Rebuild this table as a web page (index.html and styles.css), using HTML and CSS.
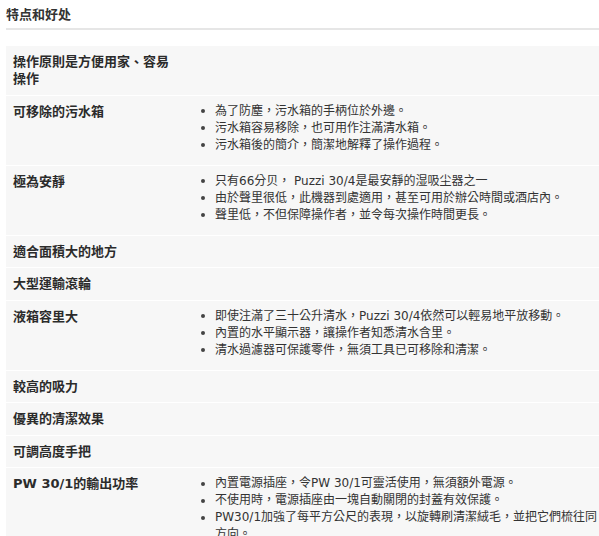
FILE: index.html
```html
<!DOCTYPE html>
<html lang="zh-Hant">
<head>
  <meta charset="UTF-8" />
  <meta name="viewport" content="width=device-width, initial-scale=1.0"/>
  <title>特点和好处</title>
  <link rel="stylesheet" href="styles.css">
</head>
<body>

<div class="features">
  <h3 class="features-title">特点和好处</h3>

  <table class="feature-table">
    <tr>
      <th>操作原則是方便用家、容易操作</th>
      <td></td>
    </tr>
    <tr>
      <th>可移除的污水箱</th>
      <td>
        <ul>
          <li>為了防塵，污水箱的手柄位於外邊。</li>
          <li>污水箱容易移除，也可用作注滿清水箱。</li>
          <li>污水箱後的簡介，簡潔地解釋了操作過程。</li>
        </ul>
      </td>
    </tr>
    <tr>
      <th>極為安靜</th>
      <td>
        <ul>
          <li>只有66分贝， Puzzi 30/4是最安靜的湿吸尘器之一</li>
          <li>由於聲里很低，此機器到處適用，甚至可用於辦公時間或酒店內。</li>
          <li>聲里低，不但保障操作者，並令每次操作時間更長。</li>
        </ul>
      </td>
    </tr>
    <tr>
      <th>適合面積大的地方</th>
      <td></td>
    </tr>
    <tr>
      <th>大型運輸滾輪</th>
      <td></td>
    </tr>
    <tr>
      <th>液箱容里大</th>
      <td>
        <ul>
          <li>即使注滿了三十公升清水，Puzzi 30/4依然可以輕易地平放移動。</li>
          <li>內置的水平顯示器，讓操作者知悉清水含里。</li>
          <li>清水過濾器可保護零件，無須工具已可移除和清潔。</li>
        </ul>
      </td>
    </tr>
    <tr>
      <th>較高的吸力</th>
      <td></td>
    </tr>
    <tr>
      <th>優異的清潔效果</th>
      <td></td>
    </tr>
    <tr>
      <th>可調高度手把</th>
      <td></td>
    </tr>
    <tr>
      <th>PW 30/1的輸出功率</th>
      <td>
        <ul>
          <li>內置電源插座，令PW 30/1可靈活使用，無須額外電源。</li>
          <li>不使用時，電源插座由一塊自動關閉的封蓋有效保護。</li>
          <li>PW30/1加強了每平方公尺的表現，以旋轉刷清潔絨毛，並把它們梳往同方向。</li>
        </ul>
      </td>
    </tr>
  </table>
</div>

</body>
</html>
```

FILE: styles.css
```css
html, body {
  overflow: hidden;
}

body {
  margin: 0;
  background: #fff;
  color: #333;
  font-family: "DejaVu Sans", "Noto Sans CJK TC", sans-serif;
  font-size: 12px;
  line-height: 17px;
}

.features {
  padding-left: 6px;
}

.features-title {
  margin: 0 0 16px;
  padding: 6px 0 5px;
  font-size: 13px;
  line-height: 17px;
  font-weight: bold;
  color: #333;
  border-bottom: 2px solid #e6e6e6;
}

.feature-table {
  width: 593px;
  border-collapse: collapse;
}

.feature-table th,
.feature-table td {
  vertical-align: top;
  background: #f7f7f7;
  border-bottom: 1px solid #fff;
  padding: 7px 0 7px 14px;
  text-align: left;
}

.feature-table th {
  width: 163px;
  padding: 7px 7px 7.5px;
  font-size: 13px;
  font-weight: bold;
  color: #2b2b2b;
}

.feature-table ul {
  margin: 0 0 4px;
  padding: 0 0 0 18px;
  list-style: none;
}

.feature-table li::before {
  content: "";
  display: inline-block;
  width: 4px;
  height: 4px;
  margin: 0 10px 0 -14px;
  border-radius: 50%;
  background: #444;
  vertical-align: middle;
}
```
